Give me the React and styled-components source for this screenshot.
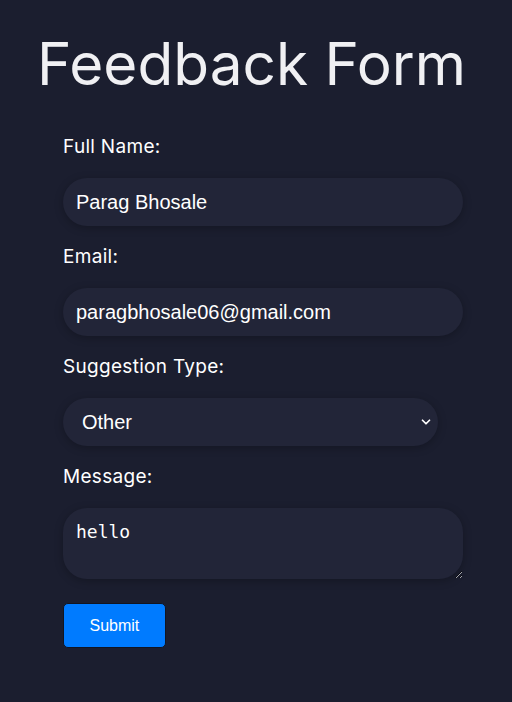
import React, { useState } from 'react';
import styled, { createGlobalStyle } from 'styled-components';
import { ChevronDown } from 'lucide-react';

const GlobalStyle = createGlobalStyle`
  html, body {
    margin: 0;
    padding: 0;
    background: #1b1e2f;
  }
  body {
    font-family: Inter, "Noto Sans", sans-serif;
    color: #f2f2f4;
  }
`;

const Page = styled.div`
  min-height: 702px;
  padding-top: 28px;
  box-sizing: border-box;
`;

const Title = styled.h1`
  margin: 0 0 36px;
  text-align: center;
  font-family: Inter, sans-serif;
  font-size: 58.5px;
  font-weight: 400;
  line-height: 72px;
  color: #f0f0f3;
  padding-right: 9px;
`;

const Form = styled.form`
  display: flex;
  flex-direction: column;
  width: 400px;
  margin-left: 63px;
`;

const Label = styled.label`
  display: block;
  font-family: Inter, sans-serif;
  font-size: 19px;
  font-weight: 400;
  letter-spacing: 0.3px;
  line-height: 22px;
  color: #ffffff;
  margin-bottom: 20px;
`;

const fieldBase = `
  box-sizing: border-box;
  border: none;
  outline: none;
  background: #222538;
  color: #ffffff;
  border-radius: 24px;
  box-shadow: 0 2px 8px rgba(0, 0, 0, 0.25);
`;

const Input = styled.input`
  ${fieldBase}
  width: 100%;
  height: 48px;
  padding: 0 13px;
  font-family: "Liberation Sans", Arial, sans-serif;
  font-size: 20px;
  margin-bottom: 20px;
`;

const SelectWrap = styled.div`
  position: relative;
  width: 375px;
  margin-bottom: 20px;
`;

const Select = styled.select`
  ${fieldBase}
  appearance: none;
  width: 100%;
  height: 48px;
  padding: 0 19px;
  font-family: "Liberation Sans", Arial, sans-serif;
  font-size: 20px;
`;

const Chevron = styled(ChevronDown)`
  position: absolute;
  right: 5px;
  top: 17px;
  pointer-events: none;
  color: #ffffff;
`;

const TextArea = styled.textarea`
  ${fieldBase}
  display: block;
  width: 100%;
  height: 71px;
  padding: 13px 13px;
  font-family: "DejaVu Sans Mono", monospace;
  font-size: 18px;
  margin-bottom: 24px;
`;

const Button = styled.button`
  align-self: flex-start;
  background: #007bff;
  color: #ffffff;
  border: 1px solid #111522;
  border-radius: 5px;
  padding: 0 25.5px;
  height: 45px;
  font-family: "Liberation Sans", Arial, sans-serif;
  font-size: 16px;
  cursor: pointer;
`;

export default function App() {
  const [name, setName] = useState('Parag Bhosale');
  const [email, setEmail] = useState('paragbhosale06@gmail.com');
  const [type, setType] = useState('other');
  const [message, setMessage] = useState('hello');

  return (
    <Page>
      <GlobalStyle />
      <Title>Feedback Form</Title>
      <Form onSubmit={(e) => e.preventDefault()}>
        <Label htmlFor="name">Full Name:</Label>
        <Input id="name" value={name} onChange={(e) => setName(e.target.value)} />

        <Label htmlFor="email">Email:</Label>
        <Input id="email" type="email" value={email} onChange={(e) => setEmail(e.target.value)} />

        <Label htmlFor="type">Suggestion Type:</Label>
        <SelectWrap>
          <Select id="type" value={type} onChange={(e) => setType(e.target.value)}>
            <option value="bug">Bug Report</option>
            <option value="feature">Feature Request</option>
            <option value="other">Other</option>
          </Select>
          <Chevron size={14} strokeWidth={3} />
        </SelectWrap>

        <Label htmlFor="message">Message:</Label>
        <TextArea id="message" value={message} onChange={(e) => setMessage(e.target.value)} />

        <Button type="submit">Submit</Button>
      </Form>
    </Page>
  );
}
